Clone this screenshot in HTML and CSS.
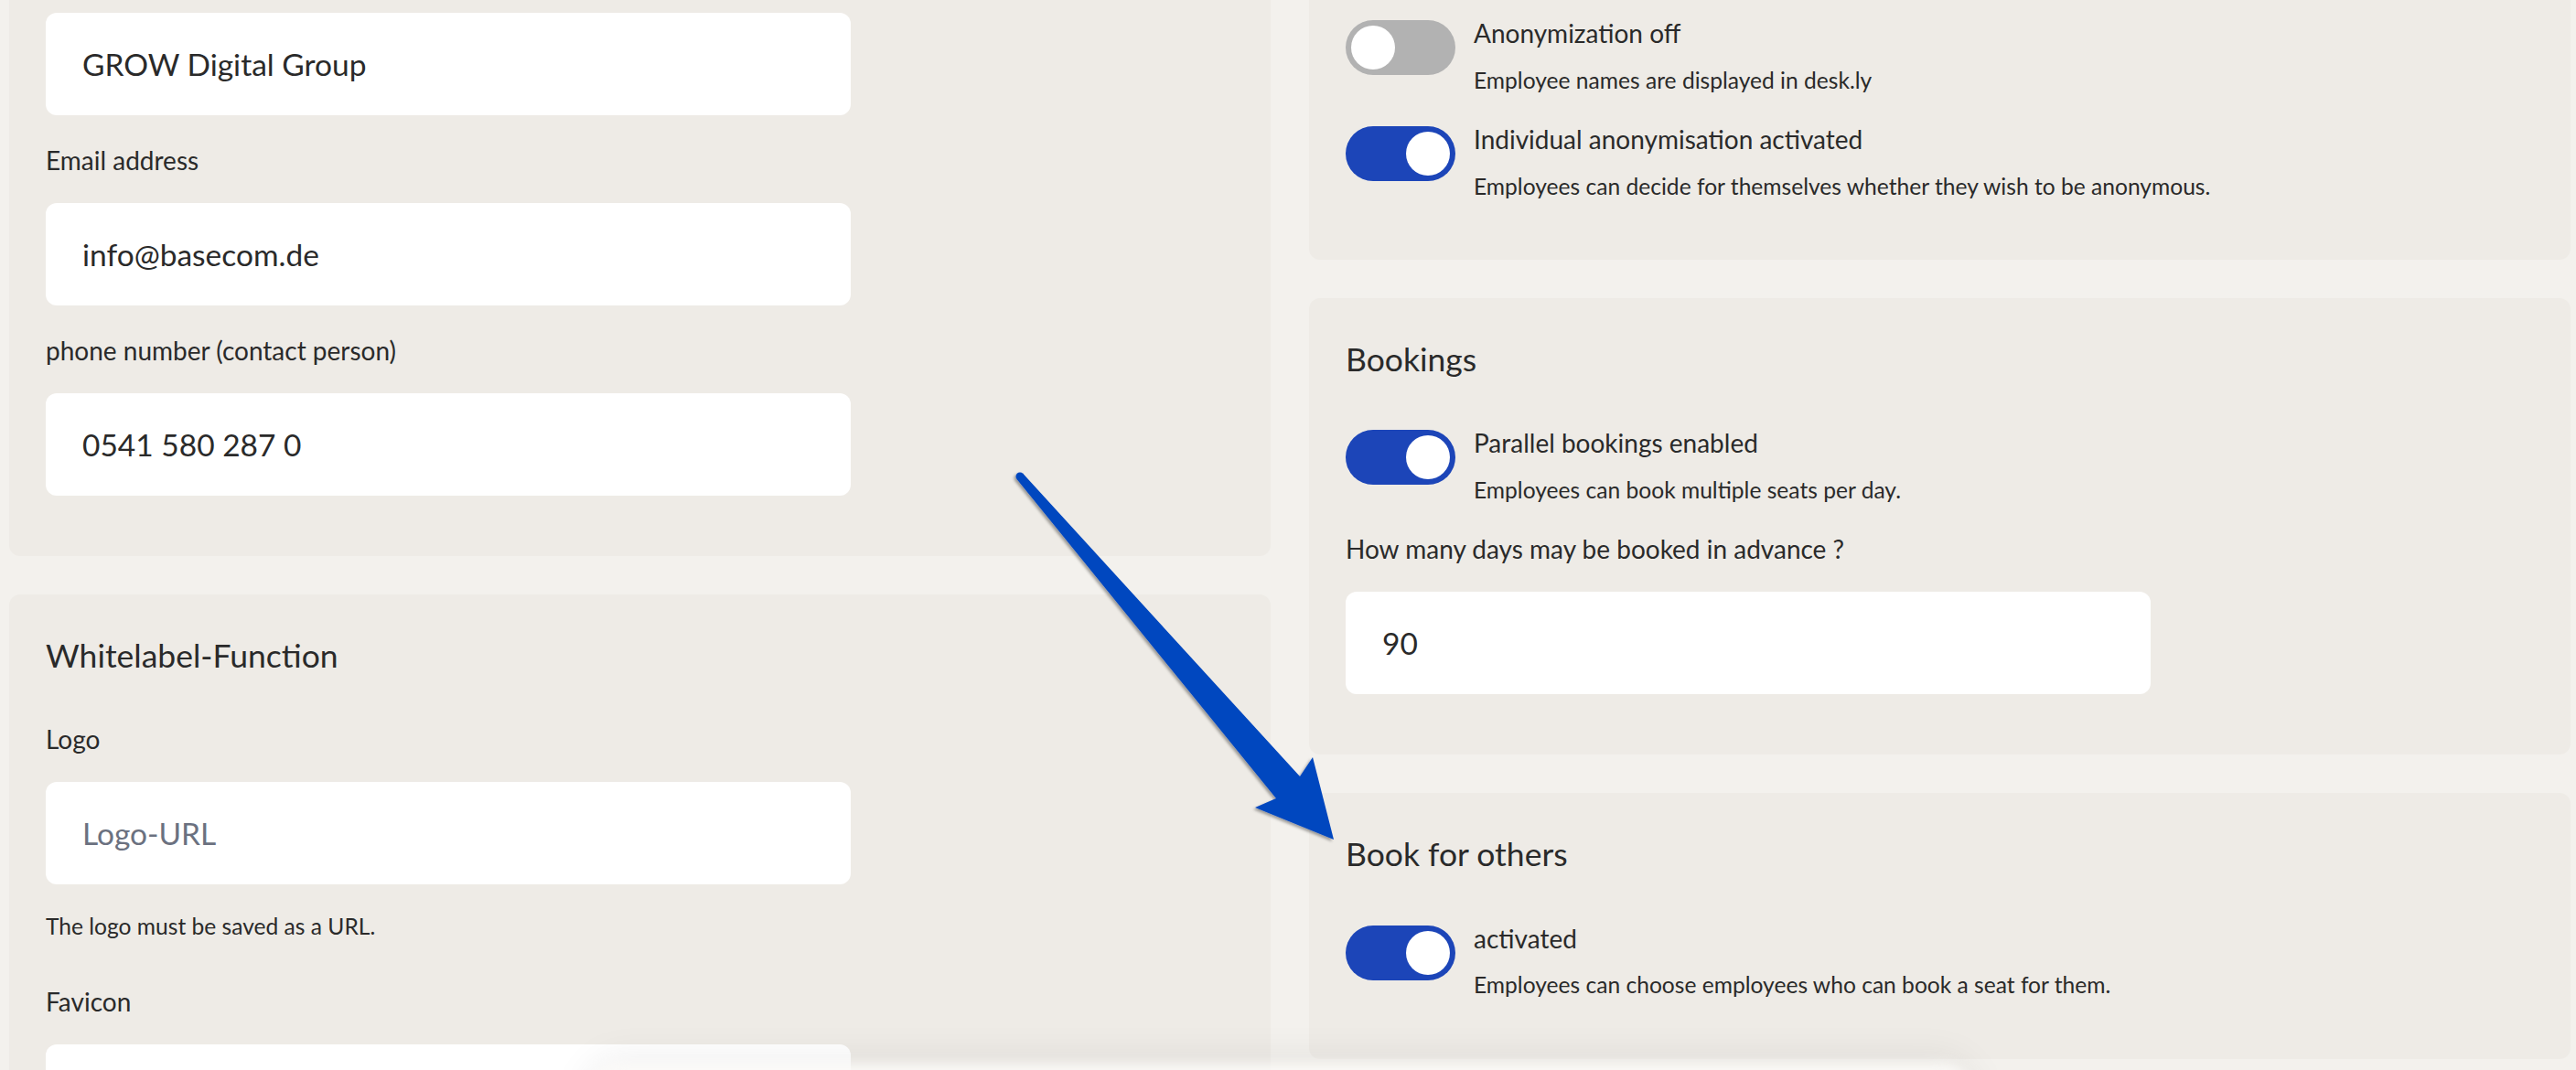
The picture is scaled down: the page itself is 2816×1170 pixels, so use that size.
FILE: index.html
```html
<!DOCTYPE html>
<html lang="en">
<head>
<meta charset="utf-8">
<title>Settings</title>
<link rel="stylesheet" href="styles.css">
</head>
<body>
<div class="page">
  <div class="col">
    <section class="card card-top">
      <input class="field" type="text" value="GROW Digital Group">
      <label class="field-label">Email address</label>
      <input class="field" type="text" value="info@basecom.de">
      <label class="field-label">phone number (contact person)</label>
      <input class="field" type="text" value="0541 580 287 0">
    </section>
    <section class="card">
      <h2 class="card-title">Whitelabel-Function</h2>
      <label class="field-label">Logo</label>
      <input class="field" type="text" placeholder="Logo-URL">
      <p class="hint">The logo must be saved as a URL.</p>
      <label class="field-label">Favicon</label>
      <input class="field" type="text">
    </section>
  </div>
  <div class="col">
    <section class="card card-top card-rows">
      <div class="toggle-row">
        <span class="toggle"><span class="knob"></span></span>
        <div class="toggle-text">
          <div class="toggle-title">Anonymization off</div>
          <div class="toggle-sub">Employee names are displayed in desk.ly</div>
        </div>
      </div>
      <div class="toggle-row">
        <span class="toggle on"><span class="knob"></span></span>
        <div class="toggle-text">
          <div class="toggle-title">Individual anonymisation activated</div>
          <div class="toggle-sub">Employees can decide for themselves whether they wish to be anonymous.</div>
        </div>
      </div>
    </section>
    <section class="card">
      <h2 class="card-title">Bookings</h2>
      <div class="toggle-row">
        <span class="toggle on"><span class="knob"></span></span>
        <div class="toggle-text">
          <div class="toggle-title">Parallel bookings enabled</div>
          <div class="toggle-sub">Employees can book multiple seats per day.</div>
        </div>
      </div>
      <label class="field-label">How many days may be booked in advance ?</label>
      <input class="field" type="text" value="90">
    </section>
    <section class="card card-rows">
      <h2 class="card-title">Book for others</h2>
      <div class="toggle-row">
        <span class="toggle on"><span class="knob"></span></span>
        <div class="toggle-text">
          <div class="toggle-title">activated</div>
          <div class="toggle-sub">Employees can choose employees who can book a seat for them.</div>
        </div>
      </div>
    </section>
  </div>
  <div class="toast-shadow"></div>
  <svg class="arrow" width="2816" height="1170" viewBox="0 0 2816 1170">
    <defs>
      <filter id="sh" x="-10%" y="-10%" width="120%" height="120%">
        <feDropShadow dx="-2" dy="2" stdDeviation="1.5" flood-color="#000" flood-opacity="0.35"/>
      </filter>
    </defs>
    <g filter="url(#sh)" fill="#0047bf">
      <circle cx="1115" cy="521" r="4.5"/>
      <polygon points="1118,517.5 1421,849 1435,828 1458,918 1372,883 1395,873 1112,524.5"/>
    </g>
  </svg>
</div>
</body>
</html>
```

FILE: styles.css
```css
* { box-sizing: border-box; }
html, body { margin: 0; padding: 0; }
body {
  background: #f3f1ed;
  font-family: Lato, "Noto Sans", sans-serif;
  color: #2a2a2a;
  width: 2816px;
  height: 1170px;
  overflow: hidden;
}
.page {
  position: relative;
  display: grid;
  grid-template-columns: 1fr 1fr;
  column-gap: 42px;
  padding: 0 6px 0 10px;
  align-items: start;
  height: 1170px;
  overflow: hidden;
}
.col {
  display: flex;
  flex-direction: column;
  gap: 42px;
}
.card {
  background: #eeebe6;
  border-radius: 12px;
  padding: 45px 40px 66px;
  display: flex;
  flex-direction: column;
  align-items: flex-start;
}
.card-top {
  margin-top: -40px;
  padding-top: 54px;
}
.card-rows { padding-bottom: 62px; }
.card-top.card-rows { padding-top: 62px; }
.card-title {
  margin: 0 0 20px;
  font-size: 35.5px;
  line-height: 44.4px;
  font-weight: 400;
}
.field-label {
  display: block;
  font-size: 28px;
  line-height: 45px;
  margin: 27px 0 24px;
}
.toggle-row + .field-label { margin-top: 24px; }
.field {
  display: block;
  width: 880px;
  height: 112px;
  border: 0;
  border-radius: 12px;
  background: #fff;
  padding: 0 40px;
  font-family: inherit;
  font-size: 33.5px;
  color: #2a2a2a;
  outline: none;
}
.field::placeholder { color: #6b7180; opacity: 1; }
.hint {
  margin: 27px 0 14px;
  font-size: 24.6px;
  line-height: 37.5px;
}
.toggle-row {
  display: flex;
  align-items: flex-start;
  gap: 20px;
}
.toggle-row + .toggle-row { margin-top: 32px; }
.card-title + .toggle-row { margin-top: 35px; }
.toggle {
  flex: none;
  position: relative;
  width: 120px;
  height: 60px;
  border-radius: 30px;
  background: #b2b2b2;
}
.toggle.on { background: #1c45b8; }
.knob {
  position: absolute;
  top: 6px;
  left: 6px;
  width: 48px;
  height: 48px;
  border-radius: 50%;
  background: #fff;
}
.toggle.on .knob { left: 66px; }
.toggle-text { margin-top: -7px; }
.toggle-title {
  font-size: 28px;
  line-height: 43.5px;
}
.toggle-sub {
  margin-top: 10px;
  font-size: 24.6px;
  line-height: 37.5px;
}
.toast-shadow {
  position: absolute;
  left: 640px;
  top: 1162px;
  width: 1520px;
  height: 80px;
  border-radius: 40px;
  background: rgba(250, 249, 247, 0.85);
  box-shadow: 0 -6px 40px rgba(0, 0, 0, 0.07);
  filter: blur(6px);
  pointer-events: none;
}
.arrow {
  position: absolute;
  left: 0;
  top: 0;
  pointer-events: none;
}
```
